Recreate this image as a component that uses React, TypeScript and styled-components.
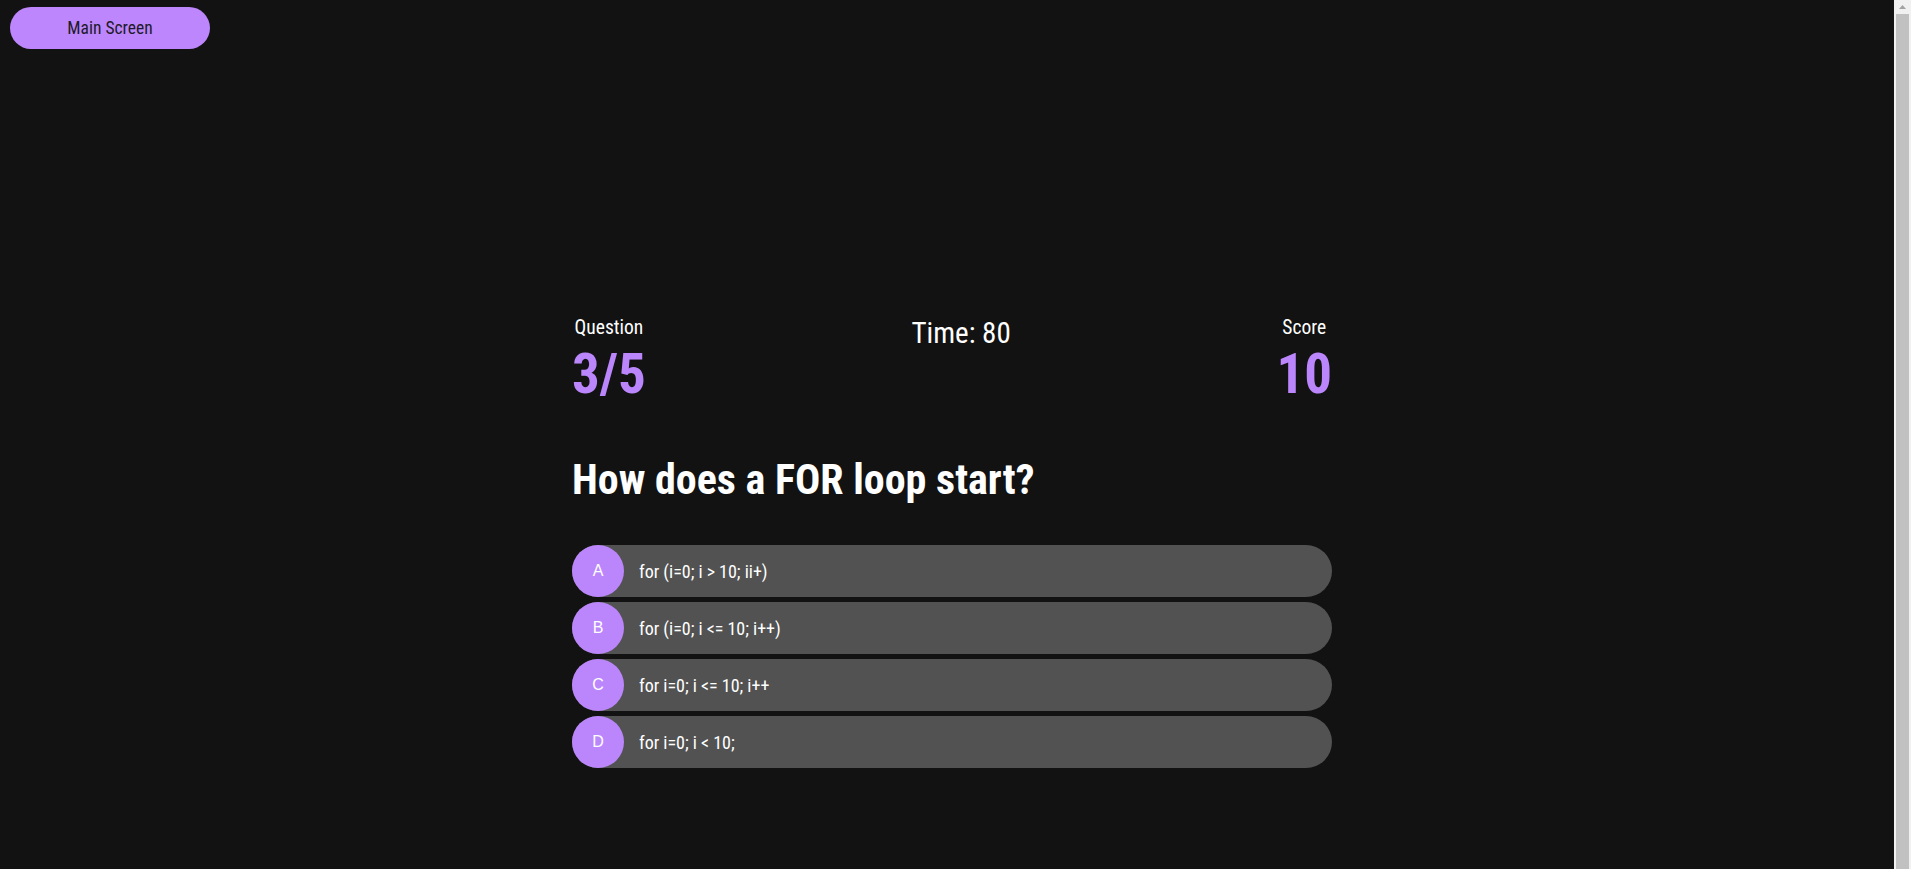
import React from "react";
import styled, { createGlobalStyle } from "styled-components";

const GlobalStyle = createGlobalStyle`
  html, body { margin: 0; padding: 0; }
  body {
    background: #121212;
    color: #ffffff;
    font-family: "Roboto Condensed", Roboto, "Liberation Sans", sans-serif;
  }
`;

const Page = styled.div`
  min-height: 100vh;
  box-sizing: border-box;
  padding: 7px 27px 0 10px;
  display: flex;
  flex-direction: column;
`;

const TopBar = styled.div`
  display: flex;
`;

const NavButton = styled.button`
  width: 200px;
  height: 42px;
  border: none;
  border-radius: 21px;
  background: #bd86fc;
  color: #1e1a2a;
  font-family: "Roboto Condensed", Roboto, sans-serif;
  font-size: 17.5px;
  cursor: pointer;
`;

const Center = styled.main`
  display: flex;
  justify-content: center;
  padding-top: 267px;
  padding-left: 10px;
`;

const Quiz = styled.section`
  width: 760px;
  display: flex;
  flex-direction: column;
`;

const Header = styled.div`
  display: flex;
  justify-content: space-between;
  align-items: flex-start;
`;

const Stat = styled.div`
  display: flex;
  flex-direction: column;
  align-items: center;
`;

const StatLabel = styled.span`
  font-size: 19.5px;
  line-height: 23px;
  color: #ffffff;
`;

const StatValue = styled.span`
  font-size: 55px;
  line-height: 70px;
  font-weight: 700;
  color: #bb86fc;
`;

const Timer = styled.div`
  font-size: 29px;
  line-height: 34px;
  color: #ffffff;
`;

const Title = styled.h1`
  margin: 47px 0 0 0;
  font-size: 42px;
  line-height: 48px;
  font-weight: 700;
  color: #ffffff;
`;

const Answers = styled.div`
  margin-top: 41px;
  display: flex;
  flex-direction: column;
  gap: 5px;
`;

const AnswerRow = styled.div`
  display: flex;
  align-items: center;
  height: 52px;
  border-radius: 26px;
  background: #525252;
  cursor: pointer;
`;

const Letter = styled.span`
  flex: 0 0 52px;
  height: 52px;
  border-radius: 50%;
  background: #bb86fc;
  color: #ffffff;
  display: flex;
  align-items: center;
  justify-content: center;
  font-family: "Liberation Sans", Arial, sans-serif;
  font-size: 16px;
`;

const AnswerText = styled.span`
  margin-left: 15px;
  font-size: 18px;
  color: #ffffff;
`;

/* imitation of the browser's vertical scrollbar, overlaid at the right edge */
const ScrollTrack = styled.div`
  position: fixed;
  top: 0;
  right: 0;
  bottom: 0;
  width: 17px;
  background: #f1f1f1;
  display: flex;
  flex-direction: column;
  align-items: center;
`;

const ScrollArrow = styled.div`
  height: 14px;
  flex: 0 0 14px;
  display: flex;
  align-items: center;
  justify-content: center;
`;

const ScrollThumb = styled.div`
  flex: 1;
  width: 13px;
  background: #c1c1c1;
`;

const answers = [
  { key: "A", text: "for (i=0; i > 10; ii+)" },
  { key: "B", text: "for (i=0; i <= 10; i++)" },
  { key: "C", text: "for i=0; i <= 10; i++" },
  { key: "D", text: "for i=0; i < 10;" },
];

export default function App() {
  return (
    <>
      <GlobalStyle />
      <Page>
        <TopBar>
          <NavButton>Main Screen</NavButton>
        </TopBar>
        <Center>
          <Quiz>
            <Header>
              <Stat>
                <StatLabel>Question</StatLabel>
                <StatValue>3/5</StatValue>
              </Stat>
              <Timer>Time: 80</Timer>
              <Stat>
                <StatLabel>Score</StatLabel>
                <StatValue>10</StatValue>
              </Stat>
            </Header>
            <Title>How does a FOR loop start?</Title>
            <Answers>
              {answers.map((a) => (
                <AnswerRow key={a.key}>
                  <Letter>{a.key}</Letter>
                  <AnswerText>{a.text}</AnswerText>
                </AnswerRow>
              ))}
            </Answers>
          </Quiz>
        </Center>
      </Page>
      <ScrollTrack>
        <ScrollArrow>
          <svg width="7" height="4" viewBox="0 0 7 4">
            <path d="M0 4 L3.5 0 L7 4 Z" fill="#a3a3a3" />
          </svg>
        </ScrollArrow>
        <ScrollThumb />
      </ScrollTrack>
    </>
  );
}
